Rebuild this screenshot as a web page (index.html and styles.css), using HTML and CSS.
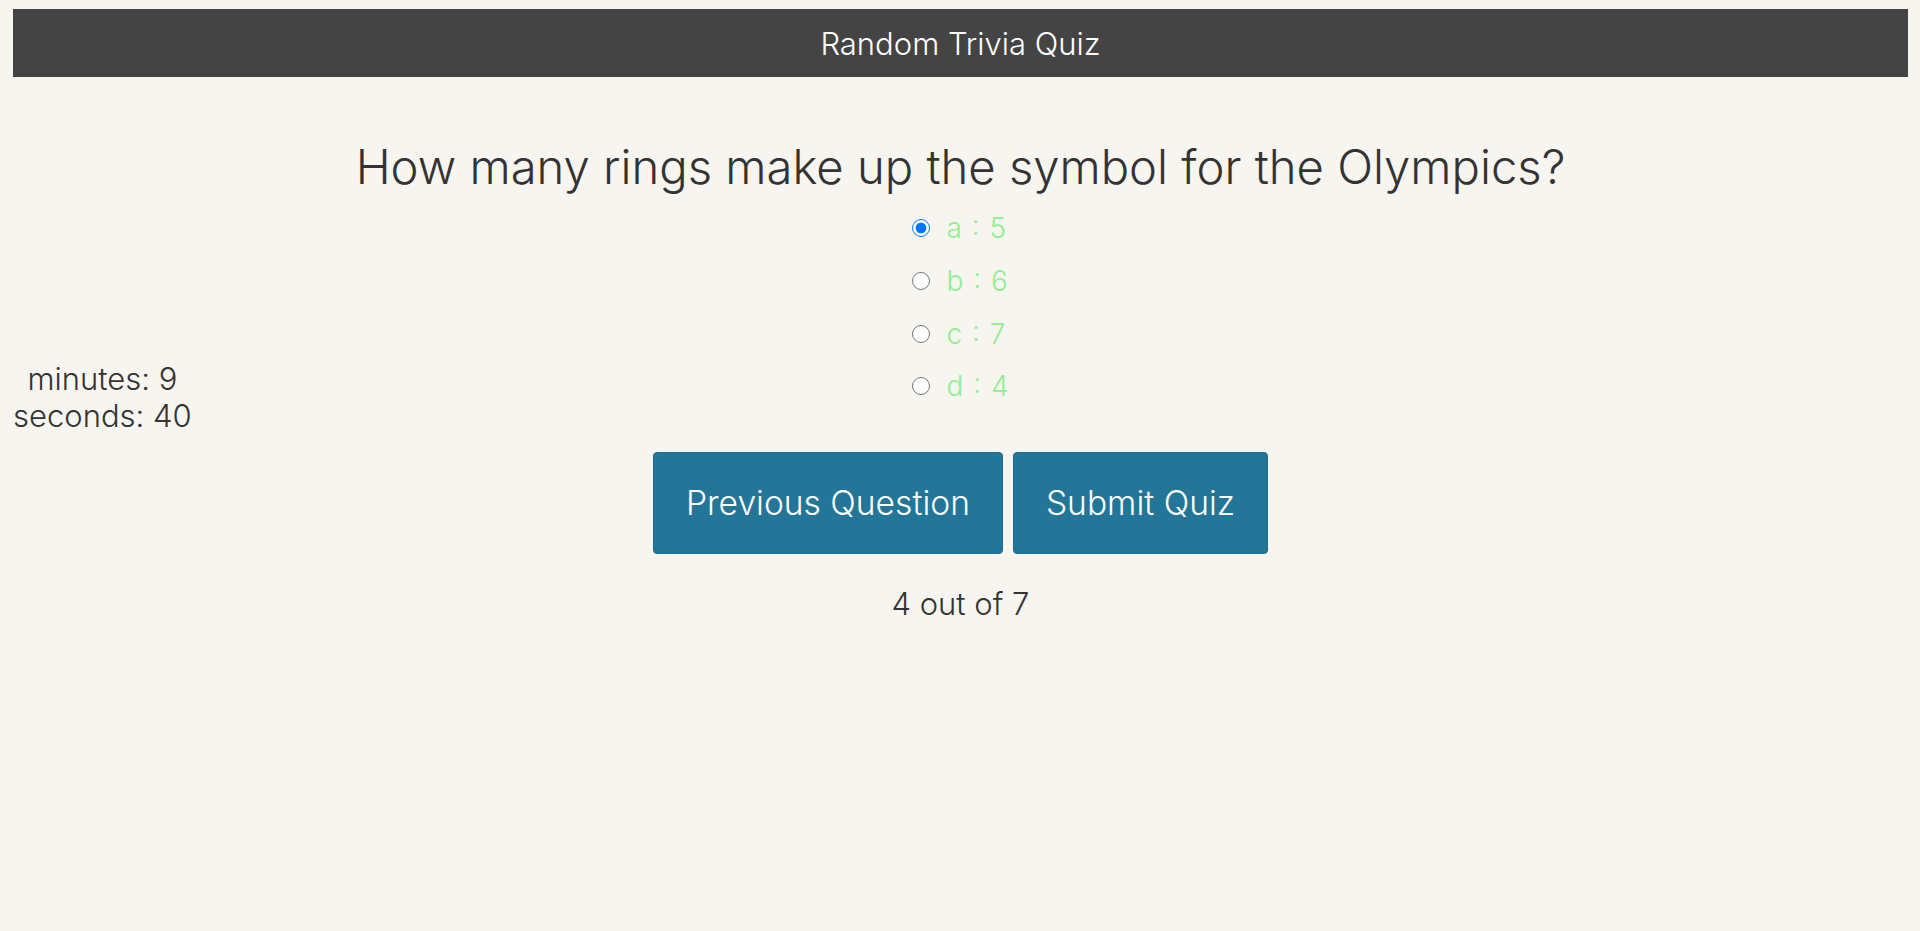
FILE: index.html
```html
<!DOCTYPE html>
<html lang="en">
<head>
<meta charset="utf-8">
<title>Random Trivia Quiz</title>
<link rel="stylesheet" href="styles.css">
</head>
<body>
<header class="topbar">Random Trivia Quiz</header>
<main class="layout">
  <div class="timer">
    <div>minutes: 9</div>
    <div>seconds: 40</div>
  </div>
  <section class="quiz">
    <h1 class="question">How many rings make up the symbol for the Olympics?</h1>
    <form class="options">
      <label class="option"><input type="radio" name="ans" checked><span>a : 5</span></label>
      <label class="option"><input type="radio" name="ans"><span>b : 6</span></label>
      <label class="option"><input type="radio" name="ans"><span>c : 7</span></label>
      <label class="option"><input type="radio" name="ans"><span>d : 4</span></label>
    </form>
    <div class="actions">
      <button class="btn" type="button">Previous Question</button>
      <button class="btn" type="button">Submit Quiz</button>
    </div>
    <div class="count">4 out of 7</div>
  </section>
  <div class="spacer"></div>
</main>
</body>
</html>
```
FILE: styles.css
```css
* { box-sizing: border-box; }
html, body { margin: 0; }
body {
  background: #f7f5f0;
  color: #333333;
  font-family: Inter, "Open Sans", sans-serif;
  font-weight: 300;
  padding: 9px 12px 0 13px;
  min-height: 931px;
}
.topbar {
  background: #444444;
  color: #ffffff;
  height: 68px;
  display: flex;
  align-items: center;
  justify-content: center;
  font-size: 31px;
  font-weight: 300;
}
.layout {
  display: grid;
  grid-template-columns: 1fr auto 1fr;
  align-items: start;
}
.timer {
  justify-self: start;
  text-align: center;
  font-size: 31px;
  line-height: 37px;
  margin-top: 283px;
}
.quiz {
  display: flex;
  flex-direction: column;
  align-items: center;
}
.question {
  margin: 60px 0 0;
  font-size: 47.2px;
  font-weight: 300;
  line-height: 60px;
  white-space: nowrap;
}
.options {
  display: flex;
  flex-direction: column;
  align-items: flex-start;
  margin-top: 5px;
}
.option {
  display: flex;
  align-items: center;
  height: 52.7px;
  color: #90ee90;
  font-size: 28px;
  font-weight: 300;
  word-spacing: 2px;
}
.option input {
  width: 18px;
  height: 18px;
  margin: 0 16px 0 0;
  accent-color: #0075ff;
}
.actions {
  display: flex;
  gap: 10px;
  margin-top: 39px;
}
.btn {
  background: #237698;
  color: #ffffff;
  border: 1px solid #1f6d8c;
  border-radius: 4px;
  height: 102px;
  padding: 0 32px;
  font-family: Inter, sans-serif;
  font-weight: 300;
  font-size: 33.6px;
}
.count {
  margin-top: 32px;
  font-size: 31px;
  line-height: 36px;
}
```
